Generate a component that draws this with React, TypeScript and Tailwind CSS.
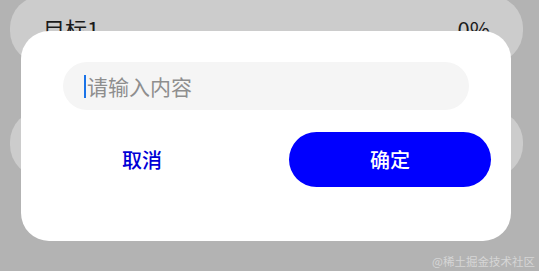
export default function App() {
  const font = { fontFamily: '"Noto Sans CJK SC", "Noto Sans", sans-serif' };

  return (
    <div className="relative w-[539px] h-[271px] overflow-hidden bg-[#b3b3b3]" style={font}>
      {/* list behind the mask */}
      <div className="flex flex-col gap-[47px] px-[10px] pr-[16px] mt-[-4px]">
        <div className="h-[67px] rounded-[32px] bg-[#cccccc] flex items-center justify-between px-[33px] pb-[2px]">
          <span className="text-[22px] text-[#1a1a1a]">目标1</span>
          <span className="text-[22px] text-[#1a1a1a]">0%</span>
        </div>
        <div className="h-[67px] rounded-[32px] bg-[#cccccc]" />
      </div>

      {/* dialog */}
      <div className="absolute left-[21px] top-[31px] w-[490px] h-[210px] rounded-[28px] bg-white px-5 pt-[31px]">
        <div className="mx-[22px] h-[48px] rounded-full bg-[#f5f5f5] flex items-center pl-[21px]">
          <span className="w-[2px] h-[23px] bg-[#1a73e8]" />
          <span className="ml-[1px] text-[21px] text-[#8e8e8e] leading-none">请输入内容</span>
        </div>
        <div className="mt-[22px] flex justify-between">
          <button className="w-[202px] h-[55px] rounded-full text-[20px] font-medium text-[#0000d6]">取消</button>
          <button className="w-[202px] h-[55px] rounded-full bg-[#0000ff] text-[20px] font-medium text-white">确定</button>
        </div>
      </div>

      {/* watermark */}
      <div className="absolute right-[4px] bottom-[4px] text-[11.5px] leading-none text-[#d6d6d6]">@稀土掘金技术社区</div>
    </div>
  );
}
